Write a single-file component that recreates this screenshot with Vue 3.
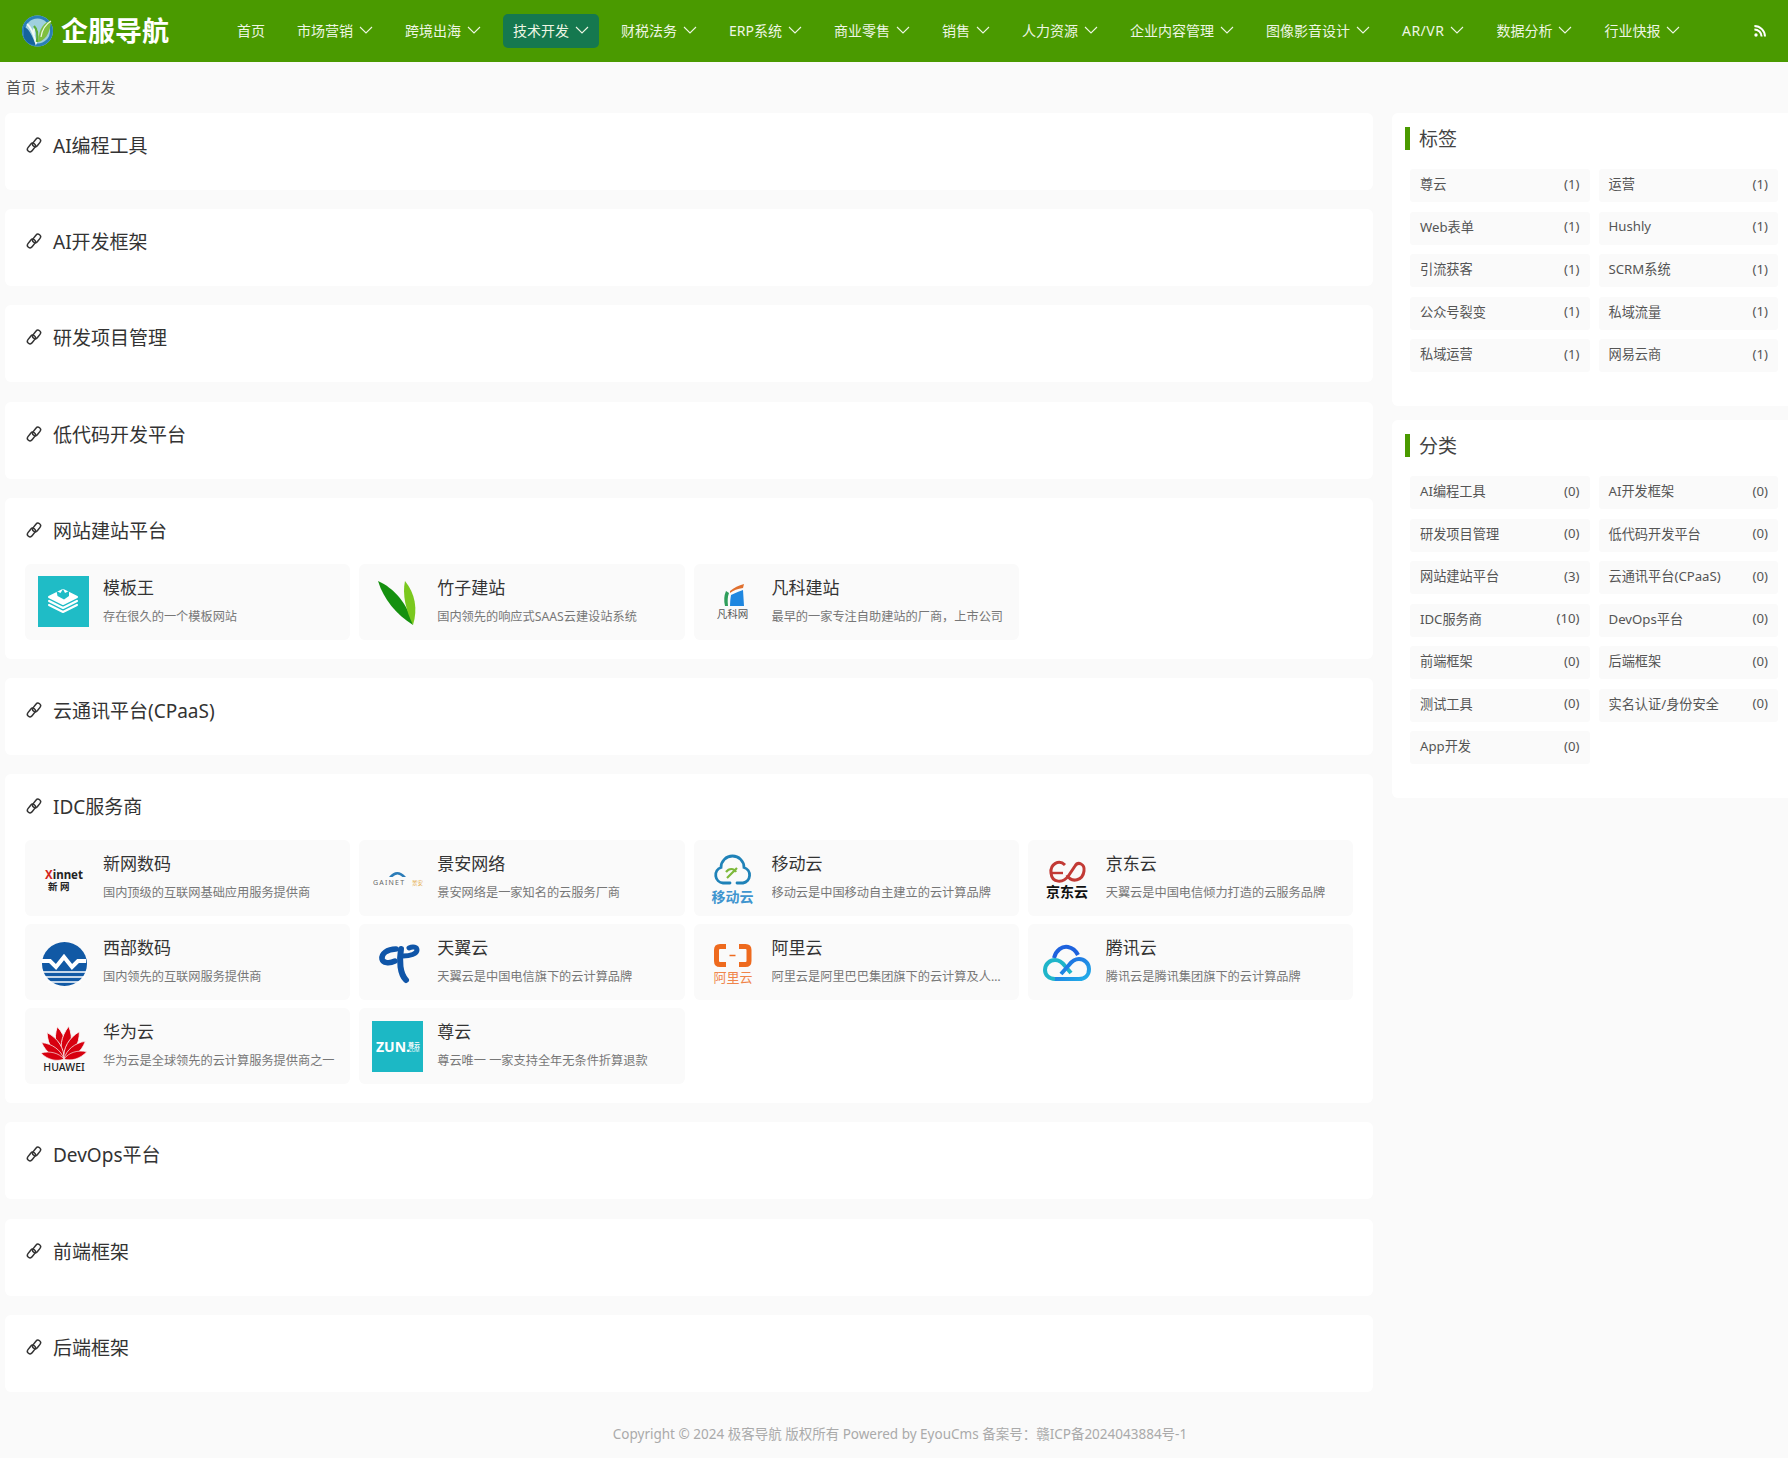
<script setup>
const navList = [
  { name: "首页" },
  { name: "市场营销", sub: true },
  { name: "跨境出海", sub: true },
  { name: "技术开发", sub: true, active: true },
  { name: "财税法务", sub: true },
  { name: "ERP系统", sub: true },
  { name: "商业零售", sub: true },
  { name: "销售", sub: true },
  { name: "人力资源", sub: true },
  { name: "企业内容管理", sub: true },
  { name: "图像影音设计", sub: true },
  { name: "AR/VR", sub: true, latin: true },
  { name: "数据分析", sub: true },
  { name: "行业快报", sub: true },
];

const sections = [
  { title: "AI编程工具", sites: [] },
  { title: "AI开发框架", sites: [] },
  { title: "研发项目管理", sites: [] },
  { title: "低代码开发平台", sites: [] },
  {
    title: "网站建站平台",
    sites: [
      { logo: "mbw", name: "模板王", desc: "存在很久的一个模板网站" },
      { logo: "zhuzi", name: "竹子建站", desc: "国内领先的响应式SAAS云建设站系统" },
      { logo: "fanke", name: "凡科建站", desc: "最早的一家专注自助建站的厂商，上市公司" },
    ],
  },
  { title: "云通讯平台(CPaaS)", sites: [] },
  {
    title: "IDC服务商",
    sites: [
      { logo: "xinnet", name: "新网数码", desc: "国内顶级的互联网基础应用服务提供商" },
      { logo: "gainet", name: "景安网络", desc: "景安网络是一家知名的云服务厂商" },
      { logo: "yidong", name: "移动云", desc: "移动云是中国移动自主建立的云计算品牌" },
      { logo: "jd", name: "京东云", desc: "天翼云是中国电信倾力打造的云服务品牌" },
      { logo: "west", name: "西部数码", desc: "国内领先的互联网服务提供商" },
      { logo: "tianyi", name: "天翼云", desc: "天翼云是中国电信旗下的云计算品牌" },
      { logo: "ali", name: "阿里云", desc: "阿里云是阿里巴巴集团旗下的云计算及人工智能服务提供商" },
      { logo: "tencent", name: "腾讯云", desc: "腾讯云是腾讯集团旗下的云计算品牌" },
      { logo: "huawei", name: "华为云", desc: "华为云是全球领先的云计算服务提供商之一" },
      { logo: "zun", name: "尊云", desc: "尊云唯一 一家支持全年无条件折算退款" },
    ],
  },
  { title: "DevOps平台", sites: [] },
  { title: "前端框架", sites: [] },
  { title: "后端框架", sites: [] },
];

const tags = [
  ["尊云", 1], ["运营", 1], ["Web表单", 1], ["Hushly", 1], ["引流获客", 1],
  ["SCRM系统", 1], ["公众号裂变", 1], ["私域流量", 1], ["私域运营", 1], ["网易云商", 1],
];

const cats = [
  ["AI编程工具", 0], ["AI开发框架", 0], ["研发项目管理", 0], ["低代码开发平台", 0],
  ["网站建站平台", 3], ["云通讯平台(CPaaS)", 0], ["IDC服务商", 10], ["DevOps平台", 0],
  ["前端框架", 0], ["后端框架", 0], ["测试工具", 0], ["实名认证/身份安全", 0], ["App开发", 0],
];

const sideBoxes = [
  { title: "标签", list: tags },
  { title: "分类", list: cats },
];

// 华为 logo petals: [angle, scale]
const petals = [
  [-10, 1], [10, 1], [-31, 0.95], [31, 0.95], [-52, 0.84], [52, 0.84], [-74, 0.72], [74, 0.72],
];
</script>

<template>
  <div class="page">
    <header class="header">
      <a class="logo">
        <svg class="logo-mark" viewBox="0 0 33 34">
          <circle cx="16.5" cy="17" r="15.5" fill="#9fd0de" />
          <path d="M16.5 1.5a15.5 15.5 0 1 1 -.1 31a15.5 15.5 0 0 1 .1 -31z M16.5 4.5a12.5 12.5 0 1 0 .1 25a12.5 12.5 0 0 0 -.1 -25z" fill="#2a7fb6" fill-rule="evenodd" />
          <path d="M3 13c5 1 8 9 12 18c-6 0-10-3-12-8z" fill="#16639c" />
          <path d="M6 10c4 3 7 11 9 19c3-6 2-12-1-16c-2 3-1 6-1 8" fill="none" stroke="#f2faf6" stroke-width="1.8" />
          <path d="M13 12c3 3 4 9 3 16" fill="none" stroke="#58ad3a" stroke-width="2.4" />
          <path d="M30 7c-7 1-12 7-13 21c6-1 12-7 13-21z" fill="#7fbf3f" />
          <path d="M30 7c-5 3-9 9-10 16" fill="none" stroke="#eef8e4" stroke-width="1.2" />
        </svg>
        <span class="logo-text">企服导航</span>
      </a>
      <nav class="nav">
        <a v-for="n in navList" :key="n.name" class="nav-item" :class="{ active: n.active, latin: n.latin }">
          {{ n.name }}
          <svg v-if="n.sub" class="chev" viewBox="0 0 14 8"><path d="M1 1l6 6l6-6" /></svg>
        </a>
      </nav>
      <svg class="rss" viewBox="0 0 12 12">
        <circle cx="2" cy="10" r="1.7" />
        <path d="M.4 4.4a7.2 7.2 0 0 1 7.2 7.2M.4 1a10.6 10.6 0 0 1 10.6 10.6" />
      </svg>
    </header>

    <div class="crumb">首页<span class="sep">&gt;</span>技术开发</div>

    <div class="wrap">
      <main class="main">
        <section v-for="s in sections" :key="s.title" class="block">
          <h3 class="block-title">
            <svg class="link-icon" viewBox="0 0 16 16">
              <rect x="0.6" y="7.9" width="9.6" height="5.2" rx="2.6" transform="rotate(-52 5.4 10.5)" />
              <rect x="5.8" y="2.9" width="9.6" height="5.2" rx="2.6" transform="rotate(-52 10.6 5.5)" />
            </svg>
            {{ s.title }}
          </h3>
          <div v-if="s.sites.length" class="cards">
            <a v-for="c in s.sites" :key="c.name" class="card">
              <svg class="card-logo" viewBox="0 0 51 51">
                <template v-if="c.logo === 'mbw'">
                  <rect width="51" height="51" fill="#1fbcc6" />
                  <g stroke-width="2" stroke-linejoin="round">
                    <path d="M11 29l14-7l14 7l-14 7z" fill="#fff" stroke="#fff" />
                    <path d="M11 26.5l14-7l14 7l-14 7z" fill="#1fbcc6" stroke="#1fbcc6" />
                    <path d="M11 25l14-7l14 7l-14 7z" fill="#fff" stroke="#fff" />
                    <path d="M11 22.5l14-7l14 7l-14 7z" fill="#1fbcc6" stroke="#1fbcc6" />
                    <path d="M11 21l14-7l14 7l-14 7z" fill="#fff" stroke="#fff" />
                  </g>
                  <path d="M19.5 20l-1-5l4 2l2.500-4l2 4l4-2l0 5l-5 3.500z" fill="#1fbcc6" />
                </template>
                <template v-else-if="c.logo === 'zhuzi'">
                  <path d="M6 5C22 12 36 28 41 49C24 38 12 24 6 5z" fill="#15900f" />
                  <path d="M33 5C43 17 46 33 41 49C34 35 30 18 33 5z" fill="#7ac81e" />
                </template>
                <template v-else-if="c.logo === 'fanke'">
                  <path d="M23 15q6-5 14-7l-1 4q-8 1-13 5z" fill="#e0702f" />
                  <path d="M19 15q-3 7-1 15h3q-1-8 1-13z" fill="#2f9e5b" />
                  <path d="M24 19q6-3 12-5l1 16h-14q0-6 1-11z" fill="#1f87e0" />
                  <text x="25.5" y="42" text-anchor="middle" class="lt" font-size="10.5" fill="#555">凡科网</text>
                </template>
                <template v-else-if="c.logo === 'xinnet'">
                  <text x="7" y="26" class="lt" font-size="11.5" font-weight="700" fill="#222">
                    <tspan fill="#d3261f">X</tspan>innet
                  </text>
                  <text x="10" y="37" class="lt" font-size="9.5" font-weight="700" fill="#222">新 网</text>
                </template>
                <template v-else-if="c.logo === 'gainet'">
                  <path d="M17 24q8-10 17 0l-3.500 0q-5-5-10 0z" fill="#2b7cb8" />
                  <text x="1" y="32" class="lt" font-size="7" letter-spacing="1.2" fill="#666">GAINET</text>
                  <text x="40" y="32" class="lt" font-size="5.500" fill="#e3a63a">景安</text>
                </template>
                <template v-else-if="c.logo === 'yidong'">
                  <path d="M23 30H16A8 8 0 0 1 14 14.500A11.500 11.500 0 0 1 37 14.500A8 8 0 0 1 36 30H30" fill="none" stroke="#1f82b8" stroke-width="2.800" stroke-linecap="round" />
                  <path d="M20 25l10-10M19 19c3-4 8-4 10 0" fill="none" stroke="#7db83a" stroke-width="2.200" />
                  <text x="25.500" y="48.500" text-anchor="middle" class="lt" font-size="14" font-weight="700" fill="#3f95cf">移动云</text>
                </template>
                <template v-else-if="c.logo === 'jd'">
                  <path d="M24 12C18 6 9 11 10 20C11 30 22 31 28 22L34 13C37 8 44 11 43 18C42 27 31 31 26 22" fill="none" stroke="#c23a35" stroke-width="3" />
                  <path d="M11 20H22" stroke="#c23a35" stroke-width="2.400" />
                  <text x="26" y="44" text-anchor="middle" class="lt" font-size="14" font-weight="700" fill="#111">京东云</text>
                </template>
                <template v-else-if="c.logo === 'west'">
                  <ellipse cx="26.500" cy="27" rx="22.500" ry="22" fill="#1159a5" />
                  <path d="M4 24h8l6 6l8-10l8 10l6-6h8" fill="none" stroke="#fff" stroke-width="4" />
                  <path d="M4 35h45M6 40h41M10 45h33" stroke="#fff" stroke-width="1.600" />
                </template>
                <template v-else-if="c.logo === 'tianyi'">
                  <g fill="none" stroke="#0f55a8" stroke-linecap="round">
                    <path d="M29 12C27 24 28 37 34 43" stroke-width="6" />
                    <path d="M24 12C15 12 9 17 10 22C11 26 17 27 23 24" stroke-width="5.500" />
                    <path d="M31 19C38 19 45 17 45 13C45 10 41 9 37 11" stroke-width="5" />
                  </g>
                </template>
                <template v-else-if="c.logo === 'ali'">
                  <g fill="none" stroke="#ee6a1e" stroke-width="5">
                    <path d="M19 9.500H13Q9.500 9.500 9.500 13V24Q9.500 27.500 13 27.500H19" />
                    <path d="M32 9.500H38.500Q42 9.500 42 13V24Q42 27.500 38.500 27.500H32" />
                  </g>
                  <path d="M22.500 18.500h6" stroke="#ee6a1e" stroke-width="1.500" />
                  <text x="26" y="45" text-anchor="middle" class="lt" font-size="13" fill="#f0854a">阿里云</text>
                </template>
                <template v-else-if="c.logo === 'tencent'">
                  <defs>
                    <linearGradient id="tc" x1="0" y1="0" x2="1" y2="1">
                      <stop offset="0" stop-color="#1d5fe0" />
                      <stop offset="1" stop-color="#22b0e8" />
                    </linearGradient>
                  </defs>
                  <path d="M13 21c2-8 8-12 14-11c5 1 8 4 10 8" fill="none" stroke="#1d62de" stroke-width="4" />
                  <path d="M14 42c-6 0-10-4-10-9c0-6 5-10 10-10c4 0 7 2 10 6l6 7" fill="none" stroke="#1fb5c9" stroke-width="4" />
                  <path d="M14 42h24c6 0 10-4 10-10s-5-10-10-10c-4 0-7 2-10 6l-8 9" fill="none" stroke="url(#tc)" stroke-width="4" />
                </template>
                <template v-else-if="c.logo === 'huawei'">
                  <path
                    v-for="p in petals"
                    :key="p[0]"
                    d="M0 0C-7-9-7-22-1-33C6-22 6-9 0 0z"
                    fill="#d7000f"
                    stroke="#fafafa"
                    stroke-width="0.8"
                    :transform="`translate(26 38) rotate(${p[0]}) scale(${p[1]})`"
                  />
                  <text x="26" y="50" text-anchor="middle" class="lt" font-size="10.500" fill="#222" font-weight="500">HUAWEI</text>
                </template>
                <template v-else-if="c.logo === 'zun'">
                  <rect width="51" height="51" fill="#1cb8c5" />
                  <text x="4" y="31" class="lt" font-size="14" font-weight="700" fill="#fff">ZUN.</text>
                  <text x="36" y="26" class="lt" font-size="6" font-weight="700" fill="#fff">尊云</text>
                  <text x="36" y="31" class="lt" font-size="4.500" fill="#fff">.COM</text>
                </template>
              </svg>
              <div class="card-text">
                <div class="card-name">{{ c.name }}</div>
                <div class="card-desc">{{ c.desc }}</div>
              </div>
            </a>
          </div>
        </section>
      </main>

      <aside class="side">
        <div v-for="b in sideBoxes" :key="b.title" class="side-box">
          <h4 class="side-title">{{ b.title }}</h4>
          <div class="side-list">
            <a v-for="t in b.list" :key="t[0]" class="side-item">
              <span>{{ t[0] }}</span>
              <span>({{ t[1] }})</span>
            </a>
          </div>
        </div>
      </aside>
    </div>

    <footer class="footer">Copyright © 2024 极客导航 版权所有 Powered by EyouCms 备案号：赣ICP备2024043884号-1</footer>
  </div>
</template>

<style>
body {
  background: #fafafa;
}
</style>

<style scoped>
.page {
  font-family: "Noto Sans", "Noto Sans CJK SC", sans-serif;
  color: #333;
  min-height: 1458px;
  background: #fafafa;
}

.lt {
  font-family: "Noto Sans", "Noto Sans CJK SC", sans-serif;
}

.header {
  height: 62px;
  background: #4a9a00;
  display: flex;
  align-items: center;
  padding-left: 21px;
  box-sizing: border-box;
}

.logo {
  display: flex;
  align-items: center;
  gap: 7px;
  width: 206px;
  flex-shrink: 0;
}

.logo-mark {
  width: 33px;
  height: 34px;
}

.logo-text {
  font-size: 27px;
  font-weight: 700;
  color: #fff;
  line-height: 34px;
}

.nav {
  display: flex;
  gap: 12px;
  flex: 1;
}

.nav-item {
  display: flex;
  align-items: center;
  gap: 6px;
  height: 34px;
  padding: 0 10px 2px;
  box-sizing: border-box;
  font-size: 14px;
  color: #eef6e4;
  border-radius: 5px;
  white-space: nowrap;
}

.nav-item.active {
  background: #15784f;
}

.nav-item.latin {
  letter-spacing: 0.5px;
}

.chev {
  width: 14px;
  height: 8px;
  fill: none;
  stroke: #eef6e4;
  stroke-width: 1.1;
}

.rss {
  width: 12px;
  height: 12px;
  margin-right: 22px;
  fill: #fff;
  stroke: #fff;
  stroke-width: 2;
}

.rss path {
  fill: none;
}

.rss circle {
  stroke: none;
}

.crumb {
  height: 51px;
  padding-left: 6px;
  font-size: 15px;
  line-height: 50px;
  color: #555;
}

.sep {
  margin: 0 6px;
  font-size: 13px;
}

.wrap {
  display: flex;
  align-items: flex-start;
  gap: 19px;
  padding-left: 5px;
}

.main {
  width: 1368px;
  flex-shrink: 0;
  display: flex;
  flex-direction: column;
  gap: 19.2px;
}

.block {
  background: #fff;
  border-radius: 6px;
  padding: 0 20px 11px;
}

.block-title {
  height: 66px;
  margin: 0;
  display: flex;
  align-items: center;
  gap: 11px;
  font-size: 19px;
  font-weight: 400;
  color: #333;
  padding: 0 0 2px 1px;
  box-sizing: border-box;
}

.link-icon {
  width: 16px;
  height: 16px;
  fill: none;
  stroke: #333;
  stroke-width: 1.5;
}

.cards {
  display: grid;
  grid-template-columns: repeat(4, 1fr);
  gap: 8px 9px;
  margin-bottom: 8px;
}

.card {
  display: flex;
  align-items: center;
  gap: 14px;
  height: 76px;
  padding: 0 14px 0 13px;
  background: #fafafa;
  border-radius: 6px;
  min-width: 0;
}

.card-logo {
  width: 51px;
  height: 51px;
  flex-shrink: 0;
  overflow: visible;
}

.card-text {
  flex: 1;
  min-width: 0;
  padding-bottom: 2px;
}

.card-name {
  font-size: 17px;
  line-height: 24px;
  color: #333;
}

.card-desc {
  margin-top: 8px;
  font-size: 12.2px;
  line-height: 18px;
  color: #777;
  white-space: nowrap;
  overflow: hidden;
  text-overflow: ellipsis;
}

.side {
  flex: 1;
  display: flex;
  flex-direction: column;
  gap: 14px;
}

.side-box {
  background: #fff;
  border-radius: 6px 0 0 6px;
  padding: 14px 10px 34px 18px;
}

.side-title {
  margin: 0 0 19px -5px;
  height: 23px;
  line-height: 24px;
  padding-left: 9px;
  border-left: 5px solid #4a9a00;
  font-size: 19px;
  font-weight: 400;
  color: #444;
}

.side-list {
  display: grid;
  grid-template-columns: 1fr 1fr;
  gap: 9.5px 9px;
}

.side-item {
  height: 33px;
  display: flex;
  align-items: center;
  justify-content: space-between;
  padding: 0 10px 4px;
  box-sizing: border-box;
  background: #fafafa;
  border-radius: 3px;
  font-size: 13.2px;
  color: #555;
}

.footer {
  margin-top: 30px;
  padding-left: 12px;
  text-align: center;
  font-size: 13.5px;
  line-height: 24px;
  color: #aaa;
}
</style>
